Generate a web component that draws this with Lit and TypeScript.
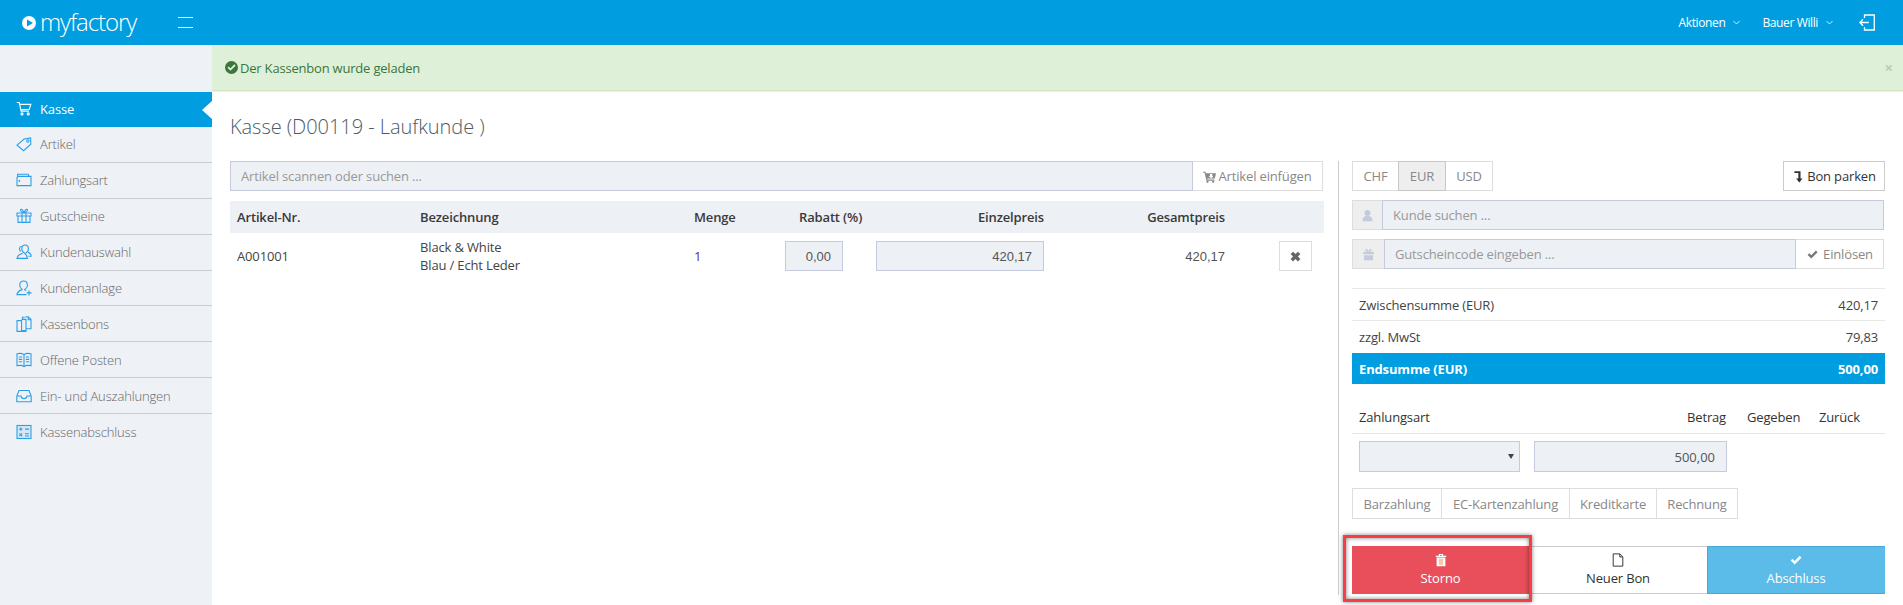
import { LitElement, html, css, svg } from "lit";
import { customElement } from "lit/decorators.js";

const side = (body: unknown) => html`<svg class="sico" viewBox="0 0 16 16" fill="none" stroke="currentColor" stroke-width="1.1">${body}</svg>`;
const ICONS: Record<string, unknown> = {
  cart: svg`<path d="M.8 1.5h2.4l1.9 8.6h8M3.6 3.4h11.2l-1.5 4.8-8.6.6"/><circle cx="6" cy="12.9" r="1"/><circle cx="12.2" cy="12.9" r="1"/>`,
  tag: svg`<path d="M1 9.2 8.2 3l6.4-1.1.2 6.3-7.2 6.5z"/><circle cx="11.8" cy="5" r="1.2"/>`,
  wallet: svg`<path d="M1 5v8.6h14V4.4H2.4L1 5.4zM1.6 4.4V2.2h10.6l1 2.2"/><circle cx="3.4" cy="9" r=".4"/>`,
  gift: svg`<path d="M1 5h14v3H1zM2 8v6.4h12V8M6 5v9.4M10 5v9.4M8 5C6 3.8 3.8 3 4.6 1.6 5.6.4 7.6 3 8 5c.4-2 2.4-4.6 3.4-3.4C12.200 3 10 3.800 8 5z"/>`,
  users: svg`<path d="M9.400 9.200c2-.8 3.200-2.800 3-5C12.200 2.200 11 1 9.200 1S6 2.200 5.800 4.200c-.2 2.200 1 4.200 3 5M6.800 9.400C4 10 1.500 11 1 14.400h10.500C11 11.500 9.800 10 8.400 9.500M12 8.400c1.500.4 3 1.400 3.200 3.800H12.500M5.600 2.200C4 2.400 3.400 3.800 3.500 5c.1 1 .5 1.900 1.200 2.500"/>`,
  useradd: svg`<path d="M6.600 9.400c-2-1-3-3-2.800-5C4 2.400 5.400 1 7.600 1s3.600 1.400 3.800 3.400c.2 2-.8 4-2.800 5 .1.700 1 .9 1.600 1.200M6.400 9.600C3.800 10.200 1.400 11.200 1 14.600h9.500M13 10.400v5M10.600 12.900h5"/>`,
  docs: svg`<path d="M1 4.600h4.600v10.800H1zM5.600 3.400h4.400v12H5.600M10 .8h2.200l2.800 2.800v9.200h-5M6.500 3.400V1.200l4-.4M12.200.8v3h2.800" /><path d="M5.800 14.900H10" stroke-width="1.800"/>`,
  book: svg`<path d="M1 1.800c2.600-.7 5.200-.5 7 .8 1.800-1.300 4.400-1.500 7-.8v12c-2.600-.7-5.200-.5-7 .8-1.800-1.300-4.400-1.500-7-.8zM8 2.600v12M2.800 5h3.400M2.800 7.400h3.400M2.800 9.800h3.400M9.800 5h3.400M9.800 7.400h3.400M9.800 9.800h3.400"/>`,
  inbox: svg`<path d="M.8 8V13.800H15.200V8L13 2.500H3zM.8 8h4c.5 2 1.400 2.600 3.200 2.600s2.700-.6 3.200-2.600h4"/>`,
  calc: svg`<rect x="1" y="1.500" width="14" height="13" fill="currentColor" fill-opacity=".12"/><path d="M4.800 3.500v3.200M3.200 5.100h3.200M9 5.100h4M3.400 9.400l2.800 2.800M6.200 9.400l-2.800 2.800M9 9.800h4M9 12h4"/>`,
};

const NAV = [
  ["Kasse", "cart"], ["Artikel", "tag"], ["Zahlungsart", "wallet"], ["Gutscheine", "gift"],
  ["Kundenauswahl", "users"], ["Kundenanlage", "useradd"], ["Kassenbons", "docs"],
  ["Offene Posten", "book"], ["Ein- und Auszahlungen", "inbox"], ["Kassenabschluss", "calc"],
];

const checkPath = "M2 8.600 4 6.500 6.500 9 12.200 3.200 14.200 5.300 6.500 13z";

@customElement("app-root")
export class AppRoot extends LitElement {
  static styles = css`
    :host { display: block; width: 1903px; height: 605px; overflow: hidden; background: #fff; position: relative;
      font-family: "Open Sans", sans-serif; font-size: 13px; letter-spacing: -.15px; color: #333; }
    * { box-sizing: border-box; }
    input { font: inherit; letter-spacing: inherit; color: inherit; outline: none; border-radius: 0; margin: 0; min-width: 0; display: block; }
    input::placeholder { color: #999; opacity: 1; }

    .top { height: 45px; background: #009ee0; color: #fff; display: flex; align-items: center; padding: 0 28px 0 22px; }
    .logo { display: flex; align-items: center; gap: 4px; width: 156px; }
    .logo svg { width: 14px; height: 14px; margin-top: 1px; }
    .logo span { font-weight: 300; font-size: 24px; letter-spacing: -1.1px; line-height: 45px; margin-top: -3px; }
    .burger { width: 15px; height: 11px; border-top: 1px solid #fff; border-bottom: 1px solid #fff; margin-top: -1px; }
    .topnav { margin-left: auto; display: flex; align-items: center; font-size: 12px; font-weight: 400; letter-spacing: -.38px; }
    .topnav .chev { width: 7px; height: 5px; margin: 0 0 0 8px; }
    .topnav .a1 { margin-right: 22px; }
    .topnav .a2 { margin-right: 26px; }
    .topnav .exit { width: 16px; height: 17px; }
    .mi { display: flex; align-items: center; }

    .layout { display: flex; height: 560px; }
    aside { width: 212px; flex: none; background: #eef1f5; padding-top: 47px; }
    .nav { height: 35.9px; border-bottom: 1px solid #c9ccd0; display: flex; align-items: center; padding-left: 16px; gap: 8px; color: #666; font-weight: 300; position: relative; }
    .nav:last-child { border-bottom: 0; }
    .nav .sico { width: 16px; height: 16px; color: #2e9fe6; flex: none; }
    .nav.on { background: #009ee0; color: #fff; height: 35px; border-bottom: 0; padding-bottom: 1px; font-weight: 400; }
    .nav.on .sico { color: #fff; }
    .nav.on::after { content: ""; position: absolute; right: 0; top: 8.500px; border: 9px solid transparent; border-left: 0; border-right: 10px solid #fff; }

    main { flex: 1; display: flex; flex-direction: column; min-width: 0; }
    .alert { height: 46px; background: #dff0d8; border-bottom: 1px solid #d3e6c8; box-shadow: 0 1px 0 #eef0ee; color: #3c763d; letter-spacing: -.2px; display: flex; align-items: center; padding: 0 10px 0 13px; gap: 2px; }
    .alert svg { width: 13px; height: 13px; }
    .alert .x { margin-left: auto; color: #b9cdb6; font-size: 15px; font-weight: 700; line-height: 1; }
    .title { margin: 0; padding: 20px 0 0 18px; height: 70px; font-size: 20px; font-weight: 300; letter-spacing: -.05px; line-height: 32px; color: #4d5a68; }
    .content { display: flex; padding-left: 18px; height: 434px; }
    .left { width: 1094px; flex: none; }
    .right { margin-left: 14px; border-left: 1px solid #c9ccd0; padding-left: 13px; width: 547px; flex: none; }

    .field { background: #edf0f5; border: 1px solid #c5cbdd; height: 30px; padding: 0 10px; }
    .btn { border: 1px solid #ddd; background: #fff; color: #888; display: flex; align-items: center; justify-content: center; height: 30px; }
    .search { display: flex; height: 30px; }
    .search input { width: 963px; }
    .search .btn { width: 130px; margin-left: 0; gap: 2px; border-left: 0; }
    .ic { width: 13px; height: 13px; flex: none; }

    .tr { display: grid; grid-template-columns: 190px 274px 91px 91px 168px 181px 1fr; }
    .th { margin-top: 10px; height: 32px; background: #edf0f5; align-items: center; font-weight: 600; color: #3a3a3a; }
    .th > :first-child { padding-left: 7px; }
    .th .rab { padding-left: 14px; }
    .end { text-align: right; }
    .td { margin-top: 8px; grid-template-rows: 30px; color: #444; align-items: center; }
    .td > :first-child { padding-left: 7px; }
    .td .bez { line-height: 18px; }
    .qty { color: #5a2a86; }
    .num { font-family: "Liberation Sans", sans-serif; letter-spacing: 0; text-align: right; color: #555; height: 30px; background: #edf0f5; border: 1px solid #c5cbdd; }
    .rabi { width: 58px; padding: 0 11px 0 0; }
    .preis { width: 168px; padding: 0 11px 0 0; }
    .ges { font-family: "Liberation Sans", sans-serif; letter-spacing: 0; text-align: right; color: #555; }
    .del { width: 33px; margin-left: 54px; color: #666; }

    .r1 { display: flex; justify-content: space-between; }
    .group { display: flex; }
    .group .btn { width: 48px; margin-left: -1px; }
    .group .btn:first-child { margin-left: 0; width: 47px; }
    .group .btn.act { background: #eee; border-color: #c8c8c8; position: relative; }
    .park { width: 102px; color: #333; border-color: #ccc; gap: 2px; }
    .inp { display: flex; width: 532px; height: 30px; margin-top: 9px; }
    .addon { background: #eee; border: 1px solid #ddd; border-right: 0; display: flex; align-items: center; justify-content: center; flex: none; color: #c3cbdc; }
    .inp input { flex: 1; }
    .einl { width: 88px; flex: none; border-left: 0; gap: 4px; }

    .sum { margin-top: 19px; width: 533px; }
    .sr { height: 32px; display: flex; justify-content: space-between; align-items: center; padding: 0 7px; border-top: 1px solid #e8e8e8; color: #444; }
    .sr.mw { height: 33px; }
    .sr.tot { background: #009ee0; color: #fff; font-weight: 700; height: 31px; border: 0; }

    .pay { margin-top: 17px; width: 533px; height: 33px; display: grid; grid-template-columns: 328px 60px 72px 1fr; align-items: center; padding-left: 7px; border-bottom: 1px solid #e8e8e8; color: #333; }
    .payr { display: flex; margin: 7px 0 0 7px; gap: 14px; }
    .sel { width: 161px; height: 31px; background: #edf0f5; border: 1px solid #c5cbdd; display: flex; align-items: center; justify-content: flex-end; padding-right: 5px; }
    .sel i { border: 3px solid transparent; border-top: 5px solid #444; border-bottom: 0; }
    .betr { width: 193px; height: 31px; padding: 0 11px 0 0; font-family: inherit; }
    .ways { display: flex; margin-top: 16px; }
    .ways .btn { height: 31px; margin-left: -1px; }
    .ways .btn:first-child { margin-left: 0; }

    .acts { display: grid; grid-template-columns: 177px 178px 178px; margin-top: 27px; height: 48px; width: 533px; position: relative; }
    .act { display: flex; flex-direction: column; align-items: center; justify-content: center; gap: 2px; line-height: 18px; }
    .act svg { width: 14px; height: 14px; }
    .storno { background: #e94f5b; color: #fff; }
    .neu { background: #fff; color: #333; border-top: 1px solid #ccc; border-bottom: 1px solid #ccc; }
    .absch { background: #5bbce9; color: #fff; border: 1px solid #4aa6d6; border-right-color: #5bbce9; }
    .mark { position: absolute; left: -9px; top: -11px; width: 189px; height: 67px; border: 3px solid #f83d46; box-shadow: 0 0 4px rgba(0,0,0,.5), inset 0 0 4px rgba(0,0,0,.5); pointer-events: none; }
  `;

  render() {
    const chev = html`<svg class="chev" viewBox="0 0 7 5" fill="none" stroke="#fff" stroke-width=".8"><path d="M.5 1 3.500 4 6.500 1"/></svg>`;
    return html`
      <div class="top">
        <div class="logo">
          <svg viewBox="0 0 14 14"><circle cx="7" cy="7" r="7" fill="#fff"/><path d="M5 3.500 11 7 5 10.500z" fill="#009ee0"/></svg>
          <span>myfactory</span>
        </div>
        <div class="burger"></div>
        <div class="topnav">
          <div class="mi a1">Aktionen${chev}</div>
          <div class="mi a2">Bauer Willi${chev}</div>
          <svg class="exit" viewBox="0 0 16 17" fill="none" stroke="#fff" stroke-width="1.300"><path d="M5.500 4V1h9.800v15H5.500v-3M.8 8.500h9M4 5.200.8 8.500 4 11.800"/></svg>
        </div>
      </div>
      <div class="layout">
        <aside>
          ${NAV.map(([t, i], n) => html`<div class="nav ${n === 0 ? "on" : ""}">${side(ICONS[i])}<span>${t}</span></div>`)}
        </aside>
        <main>
          <div class="alert">
            <svg viewBox="0 0 16 16"><circle cx="8" cy="8" r="8" fill="#3c763d"/><path d="${checkPath}" fill="#dff0d8" transform="translate(1.400 1.400) scale(.82)"/></svg>
            <span>Der Kassenbon wurde geladen</span>
            <span class="x">×</span>
          </div>
          <h1 class="title">Kasse (D00119 - Laufkunde )</h1>
          <div class="content">
            <section class="left">
              <div class="search">
                <input class="field" placeholder="Artikel scannen oder suchen ..." />
                <div class="btn">
                  <svg class="ic" viewBox="0 0 16 16" fill="#888"><path d="M0 2h3l.5 2H16l-1.500 6.500H5.200l.3 1.300H14v1.400H4.200L2 3.400H0zM8.500 5v2.500H7L10 10l3-2.500h-1.500V5z"/><circle cx="5.500" cy="14.500" r="1.400"/><circle cx="12.500" cy="14.500" r="1.400"/></svg>
                  <span>Artikel einfügen</span>
                </div>
              </div>
              <div class="tr th">
                <div>Artikel-Nr.</div><div>Bezeichnung</div><div>Menge</div><div class="rab">Rabatt (%)</div>
                <div class="end">Einzelpreis</div><div class="end">Gesamtpreis</div><div></div>
              </div>
              <div class="tr td">
                <div>A001001</div>
                <div class="bez">Black &amp; White<br />Blau / Echt Leder</div>
                <div class="qty">1</div>
                <div><input class="num rabi" .value=${"0,00"} /></div>
                <div><input class="num preis" .value=${"420,17"} /></div>
                <div class="ges">420,17</div>
                <div class="btn del"><svg class="ic" viewBox="0 0 16 16" fill="#666"><path d="M2 5 5 2 8 5 11 2 14 5 11 8 14 11 11 14 8 11 5 14 2 11 5 8z"/></svg></div>
              </div>
            </section>
            <section class="right">
              <div class="r1">
                <div class="group">
                  <div class="btn">CHF</div><div class="btn act">EUR</div><div class="btn">USD</div>
                </div>
                <div class="btn park">
                  <svg class="ic" viewBox="0 0 16 16" fill="#333"><path d="M3 1.500h7.500v9H13L9 15.500 5 10.500h2.800V3.800H3z"/></svg>
                  <span>Bon parken</span>
                </div>
              </div>
              <div class="inp">
                <div class="addon" style="width:30px">
                  <svg class="ic" viewBox="0 0 16 16" fill="currentColor"><circle cx="8" cy="5" r="3.700"/><path d="M1.800 15c0-4.500 1.700-6.500 6.200-6.500s6.200 2 6.200 6.500z"/></svg>
                </div>
                <input class="field" placeholder="Kunde suchen ..." />
              </div>
              <div class="inp">
                <div class="addon" style="width:32px">
                  <svg class="ic" viewBox="0 0 16 16" fill="currentColor"><path d="M1.500 4.500h13v3.300h-13zM2.500 8.800h11V15h-11zM8 4.500C5.500 4.500 4 3.500 4.300 2c.5-1.700 2.800-1.200 3.700 2.500.9-3.700 3.200-4.200 3.700-2.500.3 1.500-1.200 2.500-3.700 2.500z"/></svg>
                </div>
                <input class="field" placeholder="Gutscheincode eingeben ..." />
                <div class="btn einl">
                  <svg class="ic" viewBox="0 0 16 16" fill="#777"><path d="${checkPath}"/></svg>
                  <span>Einlösen</span>
                </div>
              </div>
              <div class="sum">
                <div class="sr"><span>Zwischensumme (EUR)</span><span>420,17</span></div>
                <div class="sr mw"><span>zzgl. MwSt</span><span>79,83</span></div>
                <div class="sr tot"><span>Endsumme (EUR)</span><span>500,00</span></div>
              </div>
              <div class="pay">
                <span>Zahlungsart</span><span>Betrag</span><span>Gegeben</span><span>Zurück</span>
              </div>
              <div class="payr">
                <div class="sel"><i></i></div>
                <input class="num betr" .value=${"500,00"} />
              </div>
              <div class="ways">
                <div class="btn" style="width:90px">Barzahlung</div>
                <div class="btn" style="width:129px">EC-Kartenzahlung</div>
                <div class="btn" style="width:88px">Kreditkarte</div>
                <div class="btn" style="width:82px">Rechnung</div>
              </div>
              <div class="acts">
                <div class="act storno">
                  <svg viewBox="0 0 16 16" fill="#fff"><path d="M2 3h12v1.500H2zM5.500 3V1.200h5V3h-1.300V2.400H6.800V3zM3 5.200h10V15H3z"/><path d="M5.500 6.500h5v7h-5z" fill="#f6c9a8"/></svg>
                  <span>Storno</span>
                </div>
                <div class="act neu">
                  <svg viewBox="0 0 16 16" fill="none" stroke="#333" stroke-width="1.100"><path d="M2.500 1h7.500l3.500 3.500V15h-11zM10 1v3.500h3.500"/></svg>
                  <span>Neuer Bon</span>
                </div>
                <div class="act absch">
                  <svg viewBox="0 0 16 16" fill="#fff"><path d="${checkPath}"/></svg>
                  <span>Abschluss</span>
                </div>
                <div class="mark"></div>
              </div>
            </section>
          </div>
        </main>
      </div>
    `;
  }
}
